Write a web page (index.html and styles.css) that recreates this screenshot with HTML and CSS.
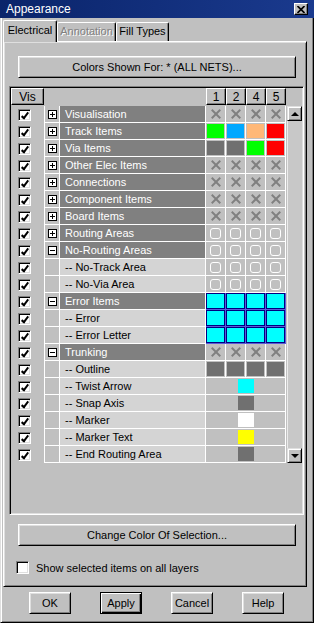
FILE: index.html
```html
<!DOCTYPE html>
<html lang="en">
<head>
  <meta charset="UTF-8">
  <title>Appearance</title>
  <link rel="stylesheet" href="styles.css">
</head>
<body>
  <div class="window">
    <div class="titlebar">
      <span class="title">Appearance</span>
      <button class="close" aria-label="Close">
        <svg width="8" height="7" viewBox="0 0 8 7"><path d="M0.5 0 L7.5 7 M7.5 0 L0.5 7" stroke="#000" stroke-width="1.7" fill="none"/></svg>
      </button>
    </div>

    <div class="frame">
      <div class="tabs">
        <div class="tab active" style="width:54px">Electrical</div>
        <div class="tab disabled" style="width:59px">Annotation</div>
        <div class="tab" style="width:53px">Fill Types</div>
      </div>

      <div class="panel">
        <button class="btn wide">Colors Shown For: * (ALL NETS)...</button>

        <div class="gridbox">
          <div class="head">
            <div class="hbtn">Vis</div>
            <div class="hblank"></div>
            <div class="hbtn">1</div>
            <div class="hbtn">2</div>
            <div class="hbtn">4</div>
            <div class="hbtn">5</div>
          </div>

          <div class="gbody">
            <div class="rows">
              <div class="row">
                <div class="vis"><span class="cb on"></span></div>
                <div class="exp"><span class="pm plus"></span></div>
                <div class="name group">Visualisation</div>
                <div class="c"><span class="x"></span></div><div class="c"><span class="x"></span></div><div class="c"><span class="x"></span></div><div class="c"><span class="x"></span></div>
              </div>
              <div class="row">
                <div class="vis"><span class="cb on"></span></div>
                <div class="exp"><span class="pm plus"></span></div>
                <div class="name group">Track Items</div>
                <div class="c"><span class="sw green"></span></div><div class="c"><span class="sw blue"></span></div><div class="c"><span class="sw orange"></span></div><div class="c"><span class="sw red"></span></div>
              </div>
              <div class="row">
                <div class="vis"><span class="cb on"></span></div>
                <div class="exp"><span class="pm plus"></span></div>
                <div class="name group">Via Items</div>
                <div class="c"><span class="sw gray"></span></div><div class="c"><span class="sw gray"></span></div><div class="c"><span class="sw green"></span></div><div class="c"><span class="sw red"></span></div>
              </div>
              <div class="row">
                <div class="vis"><span class="cb on"></span></div>
                <div class="exp"><span class="pm plus"></span></div>
                <div class="name group">Other Elec Items</div>
                <div class="c"><span class="x"></span></div><div class="c"><span class="x"></span></div><div class="c"><span class="x"></span></div><div class="c"><span class="x"></span></div>
              </div>
              <div class="row">
                <div class="vis"><span class="cb on"></span></div>
                <div class="exp"><span class="pm plus"></span></div>
                <div class="name group">Connections</div>
                <div class="c"><span class="x"></span></div><div class="c"><span class="x"></span></div><div class="c"><span class="x"></span></div><div class="c"><span class="x"></span></div>
              </div>
              <div class="row">
                <div class="vis"><span class="cb on"></span></div>
                <div class="exp"><span class="pm plus"></span></div>
                <div class="name group">Component Items</div>
                <div class="c"><span class="x"></span></div><div class="c"><span class="x"></span></div><div class="c"><span class="x"></span></div><div class="c"><span class="x"></span></div>
              </div>
              <div class="row">
                <div class="vis"><span class="cb on"></span></div>
                <div class="exp"><span class="pm plus"></span></div>
                <div class="name group">Board Items</div>
                <div class="c"><span class="x"></span></div><div class="c"><span class="x"></span></div><div class="c"><span class="x"></span></div><div class="c"><span class="x"></span></div>
              </div>
              <div class="row">
                <div class="vis"><span class="cb on"></span></div>
                <div class="exp"><span class="pm plus"></span></div>
                <div class="name group">Routing Areas</div>
                <div class="c"><span class="o"></span></div><div class="c"><span class="o"></span></div><div class="c"><span class="o"></span></div><div class="c"><span class="o"></span></div>
              </div>
              <div class="row">
                <div class="vis"><span class="cb on"></span></div>
                <div class="exp"><span class="pm"></span></div>
                <div class="name group">No-Routing Areas</div>
                <div class="c"><span class="o"></span></div><div class="c"><span class="o"></span></div><div class="c"><span class="o"></span></div><div class="c"><span class="o"></span></div>
              </div>
              <div class="row">
                <div class="vis"><span class="cb on"></span></div>
                <div class="exp"></div>
                <div class="name item">-- No-Track Area</div>
                <div class="c"><span class="o"></span></div><div class="c"><span class="o"></span></div><div class="c"><span class="o"></span></div><div class="c"><span class="o"></span></div>
              </div>
              <div class="row">
                <div class="vis"><span class="cb on"></span></div>
                <div class="exp"></div>
                <div class="name item">-- No-Via Area</div>
                <div class="c"><span class="o"></span></div><div class="c"><span class="o"></span></div><div class="c"><span class="o"></span></div><div class="c"><span class="o"></span></div>
              </div>
              <div class="row">
                <div class="vis"><span class="cb on"></span></div>
                <div class="exp"><span class="pm"></span></div>
                <div class="name group">Error Items</div>
                <div class="c err"><span class="sw cyan"></span></div><div class="c err"><span class="sw cyan"></span></div><div class="c err"><span class="sw cyan"></span></div><div class="c err"><span class="sw cyan"></span></div>
              </div>
              <div class="row">
                <div class="vis"><span class="cb on"></span></div>
                <div class="exp"></div>
                <div class="name item">-- Error</div>
                <div class="c err"><span class="sw cyan"></span></div><div class="c err"><span class="sw cyan"></span></div><div class="c err"><span class="sw cyan"></span></div><div class="c err"><span class="sw cyan"></span></div>
              </div>
              <div class="row">
                <div class="vis"><span class="cb on"></span></div>
                <div class="exp"></div>
                <div class="name item">-- Error Letter</div>
                <div class="c err"><span class="sw cyan"></span></div><div class="c err"><span class="sw cyan"></span></div><div class="c err"><span class="sw cyan"></span></div><div class="c err"><span class="sw cyan"></span></div>
              </div>
              <div class="row">
                <div class="vis"><span class="cb on"></span></div>
                <div class="exp"><span class="pm"></span></div>
                <div class="name group">Trunking</div>
                <div class="c"><span class="x"></span></div><div class="c"><span class="x"></span></div><div class="c"><span class="x"></span></div><div class="c"><span class="x"></span></div>
              </div>
              <div class="row">
                <div class="vis"><span class="cb on"></span></div>
                <div class="exp"></div>
                <div class="name item">-- Outline</div>
                <div class="c"><span class="sw gray"></span></div><div class="c"><span class="sw gray"></span></div><div class="c"><span class="sw gray"></span></div><div class="c"><span class="sw gray"></span></div>
              </div>
              <div class="row">
                <div class="vis"><span class="cb on"></span></div>
                <div class="exp"></div>
                <div class="name item">-- Twist Arrow</div>
                <div class="c span"><span class="sw cyan"></span></div>
              </div>
              <div class="row">
                <div class="vis"><span class="cb on"></span></div>
                <div class="exp"></div>
                <div class="name item">-- Snap Axis</div>
                <div class="c span"><span class="sw gray"></span></div>
              </div>
              <div class="row">
                <div class="vis"><span class="cb on"></span></div>
                <div class="exp"></div>
                <div class="name item">-- Marker</div>
                <div class="c span"><span class="sw white"></span></div>
              </div>
              <div class="row">
                <div class="vis"><span class="cb on"></span></div>
                <div class="exp"></div>
                <div class="name item">-- Marker Text</div>
                <div class="c span"><span class="sw yellow"></span></div>
              </div>
              <div class="row">
                <div class="vis"><span class="cb on"></span></div>
                <div class="exp"></div>
                <div class="name item">-- End Routing Area</div>
                <div class="c span"><span class="sw gray"></span></div>
              </div>
            </div>

            <div class="scroll">
              <div class="sbtn"><span class="tri up"></span></div>
              <div class="track"></div>
              <div class="sbtn"><span class="tri down"></span></div>
            </div>
          </div>
        </div>

        <button class="btn wide change">Change Color Of Selection...</button>

        <label class="check"><span class="cb"></span>Show selected items on all layers</label>
      </div>

      <div class="actions">
        <button class="btn act">OK</button>
        <button class="btn act default">Apply</button>
        <button class="btn act">Cancel</button>
        <button class="btn act">Help</button>
      </div>
    </div>
  </div>
</body>
</html>
```

FILE: styles.css
```css
body {
  margin: 0;
  background: #c0c0c0;
  font-family: "Liberation Sans", Arial, sans-serif;
  font-size: 11px;
  color: #000;
}

.window {
  width: 314px;
  height: 623px;
}

/* title bar */
.titlebar {
  height: 18px;
  box-sizing: border-box;
  padding: 0 6px;
  display: flex;
  align-items: center;
  justify-content: space-between;
  background: linear-gradient(to right, #0a246a, #1a3a8e);
  color: #fff;
  font-size: 12px;
}

.close {
  width: 14px;
  height: 12px;
  padding: 0;
  display: flex;
  align-items: center;
  justify-content: center;
  background: #c0c0c0;
  border: 1px solid;
  border-color: #fff #000 #000 #fff;
  box-shadow: inset -1px -1px #808080;
}

.frame {
  height: 605px;
  box-sizing: border-box;
  border: 1px solid;
  border-top: 0;
  border-color: #dfdfdf #000 #000 #dfdfdf;
  box-shadow: inset 1px 0 #fff, inset -1px -1px #808080;
  padding: 2px 0 0 2px;
}

/* tabs */
.tabs {
  display: flex;
  align-items: flex-end;
  height: 21px;
}

.tab {
  height: 19px;
  box-sizing: border-box;
  text-align: center;
  line-height: 17px;
  border: 1px solid;
  border-bottom: 0;
  border-color: #fff #000 #000 #fff;
  border-radius: 2px 2px 0 0;
  box-shadow: inset -1px 0 #808080;
  white-space: nowrap;
}

.tab.active {
  height: 22px;
  margin-bottom: -1px;
  line-height: 18px;
  position: relative;
  z-index: 1;
  background: #c0c0c0;
}

.tab.disabled {
  color: #808080;
  text-shadow: 1px 1px 0 #fff;
}

.panel {
  width: 304px;
  height: 546px;
  box-sizing: border-box;
  border: 1px solid;
  border-color: #fff #000 #000 #fff;
  box-shadow: inset 1px 1px #dfdfdf, inset -1px -1px #808080;
  padding-top: 14px;
}

/* buttons */
.btn {
  font: inherit;
  color: #000;
  background: #c0c0c0;
  border: 1px solid;
  border-color: #fff #000 #000 #fff;
  box-shadow: inset 1px 1px #dfdfdf, inset -1px -1px #808080;
  padding: 0;
  height: 22px;
}

.wide {
  display: block;
  width: 278px;
  margin-left: 14px;
}

.change {
  margin-top: 9px;
}

.act {
  width: 42px;
}

.act.default {
  border-color: #000;
  box-shadow: inset 1px 1px #fff, inset -1px -1px #000, inset -2px -2px #808080;
}

.actions {
  display: flex;
  gap: 29px;
  margin: 5px 0 0 26px;
}

/* checkbox */
.cb {
  display: block;
  width: 13px;
  height: 12px;
  box-sizing: border-box;
  border: 1px solid;
  border-color: #808080 #fff #fff #808080;
  box-shadow: inset 1px 1px #000, inset -1px -1px #dfdfdf;
  background: #fff;
  position: relative;
}

.cb.on::after {
  content: "";
  position: absolute;
  left: 4px;
  top: 1px;
  width: 2px;
  height: 6px;
  border: solid #000;
  border-width: 0 2px 2px 0;
  transform: rotate(38deg);
}

.check {
  display: flex;
  align-items: center;
  gap: 7px;
  margin: 15px 0 0 12px;
}

.check .cb {
  height: 13px;
}

/* grid */
.gridbox {
  margin: 8px 0 0 5px;
  width: 295px;
  height: 429px;
  box-sizing: border-box;
  border: 1px solid;
  border-color: #808080 #fff #fff #808080;
  box-shadow: inset 1px 1px #000, inset -1px -1px #dfdfdf;
  padding: 1px;
}

.head {
  display: grid;
  grid-template-columns: 33px 162px repeat(4, 20px);
  height: 17px;
}

.hbtn {
  box-sizing: border-box;
  border: 1px solid;
  border-color: #fff #000 #000 #fff;
  box-shadow: inset -1px -1px #808080;
  display: flex;
  align-items: center;
  justify-content: center;
  font-size: 12px;
}

.gbody {
  display: flex;
  margin-top: 1px;
}

.rows {
  width: 275px;
}

.row {
  display: grid;
  grid-template-columns: 33px 16px 146px repeat(4, 20px);
  height: 17px;
}

.vis {
  padding: 3px 0 0 7px;
}

.exp {
  box-sizing: border-box;
  border: 1px solid #fff;
  border-top: 0;
  display: flex;
  align-items: center;
  padding-left: 3px;
}

.pm {
  width: 9px;
  height: 9px;
  box-sizing: border-box;
  border: 1px solid #000;
  background: #fff;
  position: relative;
}

.pm::before {
  content: "";
  position: absolute;
  left: 1px;
  top: 3px;
  width: 5px;
  height: 1px;
  background: #000;
}

.pm.plus::after {
  content: "";
  position: absolute;
  left: 3px;
  top: 1px;
  width: 1px;
  height: 5px;
  background: #000;
}

.name {
  box-sizing: border-box;
  border-right: 1px solid #fff;
  border-bottom: 1px solid #fff;
  padding-left: 5px;
  line-height: 16px;
  white-space: nowrap;
  overflow: hidden;
}

.group {
  background: #808080;
  color: #fff;
}

.item {
  background: #d4d4d4;
}

.c {
  box-sizing: border-box;
  border-right: 1px solid #fff;
  border-bottom: 1px solid #fff;
  display: flex;
  align-items: center;
  justify-content: center;
}

.c.span {
  grid-column: span 4;
}

.c.err {
  background: #000080;
  border-color: #5a5ad8;
}

.sw {
  width: 17px;
  height: 14px;
}

.c.span .sw {
  width: 16px;
}

.green { background: #00ff00; }
.blue { background: #00a8ff; }
.orange { background: #ffb878; }
.red { background: #ff0000; }
.gray { background: #707070; }
.cyan { background: #00ffff; }
.white { background: #ffffff; }
.yellow { background: #ffff00; }

.x {
  width: 10px;
  height: 10px;
  position: relative;
}

.x::before,
.x::after {
  content: "";
  position: absolute;
  left: -1px;
  top: 4px;
  width: 12px;
  height: 2px;
  background: #808080;
  transform: rotate(45deg);
}

.x::after {
  transform: rotate(-45deg);
}

.o {
  width: 11px;
  height: 11px;
  box-sizing: border-box;
  border: 1px solid #fff;
  border-radius: 3px;
}

/* scrollbar */
.scroll {
  width: 15px;
  height: 357px;
  margin-left: 1px;
  display: flex;
  flex-direction: column;
}

.sbtn {
  height: 15px;
  box-sizing: border-box;
  border: 1px solid;
  border-color: #dfdfdf #000 #000 #dfdfdf;
  box-shadow: inset 1px 1px #fff, inset -1px -1px #808080;
  display: flex;
  align-items: center;
  justify-content: center;
}

.track {
  flex: 1;
  background: #c8c8c8;
  box-shadow: inset 1px 0 #ececec;
}

.tri {
  width: 0;
  height: 0;
  border-left: 4px solid transparent;
  border-right: 4px solid transparent;
}

.tri.up {
  border-bottom: 4px solid #000;
}

.tri.down {
  border-top: 4px solid #000;
}
```
